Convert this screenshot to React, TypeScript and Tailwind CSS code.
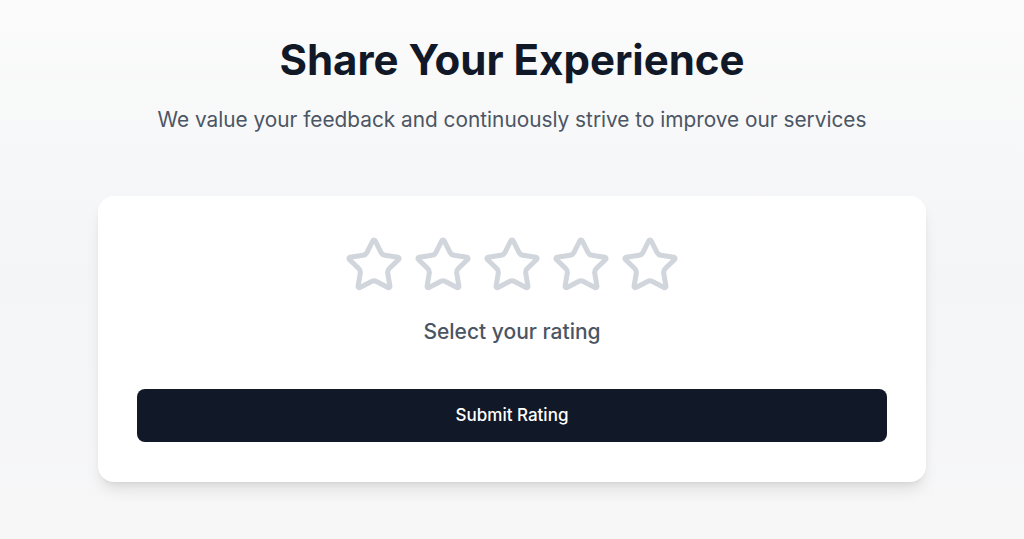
import React, { useState } from "react";

function StarIcon({ filled }: { filled: boolean }) {
  return (
    <svg
      viewBox="0 0 24 24"
      className={filled ? "w-[60px] h-[60px] text-yellow-400" : "w-[60px] h-[60px] text-gray-300"}
      fill={filled ? "currentColor" : "none"}
      stroke="currentColor"
      strokeWidth={2}
      strokeLinecap="round"
      strokeLinejoin="round"
    >
      <path d="M11.525 2.295a.53.53 0 0 1 .95 0l2.31 4.679a2.123 2.123 0 0 0 1.595 1.16l5.166.756a.53.53 0 0 1 .294.904l-3.736 3.638a2.123 2.123 0 0 0-.611 1.878l.882 5.14a.53.53 0 0 1-.771.56l-4.618-2.428a2.122 2.122 0 0 0-1.973 0L6.396 21.01a.53.53 0 0 1-.77-.56l.881-5.139a2.122 2.122 0 0 0-.611-1.879L2.16 9.795a.53.53 0 0 1 .294-.906l5.165-.755a2.122 2.122 0 0 0 1.597-1.16z" />
    </svg>
  );
}

export default function App() {
  const [rating, setRating] = useState(0);
  return (
    <div
      className="min-h-[539px] w-full bg-gradient-to-b from-[#fbfbfb] via-[#f4f5f7] to-[#f7f7f8] flex flex-col items-center pt-[34px]"
      style={{ fontFamily: "Inter, 'Noto Sans', sans-serif" }}
    >
      <h1 className="text-[42px] leading-[52px] font-bold text-[#111827]">
        Share Your Experience
      </h1>
      <p className="mt-[20px] text-[20.8px] leading-[28px] text-[#4b5563]">
        We value your feedback and continuously strive to improve our services
      </p>
      <div className="mt-[62px] w-[828px] bg-white rounded-2xl shadow-lg px-[39px] pt-[39px] pb-[40px] flex flex-col items-center">
        <div className="flex gap-[9px]">
          {[1, 2, 3, 4, 5].map((i) => (
            <button key={i} onClick={() => setRating(i)} className="p-0">
              <StarIcon filled={i <= rating} />
            </button>
          ))}
        </div>
        <div className="mt-[23px] text-[21px] leading-[28px] font-medium text-[#4b5563]">
          Select your rating
        </div>
        <button className="mt-[43px] w-full h-[53px] rounded-lg bg-[#111827] text-white text-[17px] font-medium">
          Submit Rating
        </button>
      </div>
    </div>
  );
}
